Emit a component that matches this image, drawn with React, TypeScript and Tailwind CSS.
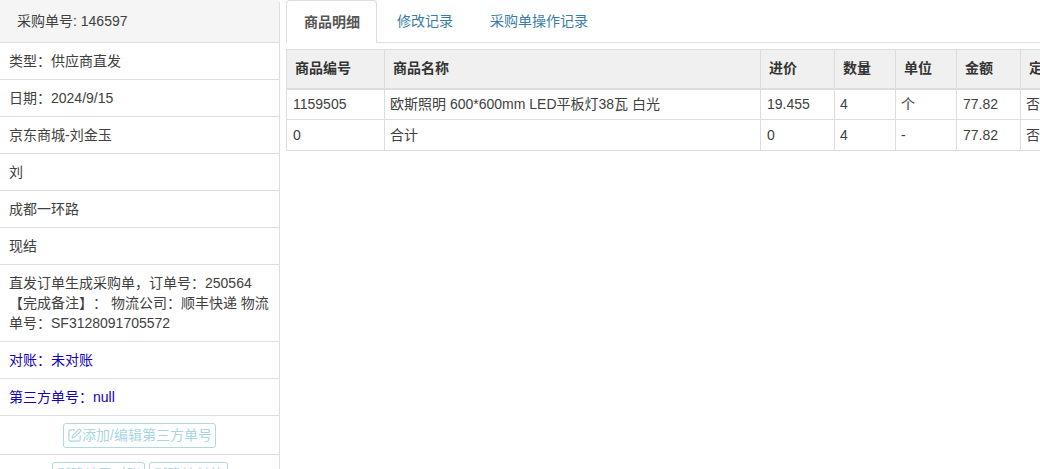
import React from 'react';
import { SquarePen } from 'lucide-react';

const ROWS = ['类型:供应商直发', '日期:2024/9/15', '京东商城-刘金玉', '刘', '成都一环路', '现结'].map((r) =>
  r.replace(':', '\uFF1A'),
);

const COLUMNS = [
  { name: '商品编号', width: 'w-[98px]', pad: 'pl-[6px]' },
  { name: '商品名称', width: 'w-[376px]', pad: 'pl-[5px]' },
  { name: '进价', width: 'w-[74px]', pad: 'pl-[6px]' },
  { name: '数量', width: 'w-[61px]', pad: 'pl-[5px]' },
  { name: '单位', width: 'w-[61px]', pad: 'pl-[5px]' },
  { name: '金额', width: 'w-[64px]', pad: 'pl-[6px]' },
  { name: '定制', width: 'w-[60px]', pad: 'pl-[5px]' },
];

const ITEMS = [
  ['1159505', '欧斯照明 600*600mm LED平板灯38瓦 白光', '19.455', '4', '个', '77.82', '否'],
  ['0', '合计', '0', '4', '-', '77.82', '否'],
];

const ListRow = ({ children, blue }: { children: React.ReactNode; blue?: boolean }) => (
  <div className={`border-b border-[#ddd] px-[9px] py-2 leading-5 ${blue ? 'text-[#1500b8]' : ''}`}>{children}</div>
);

const OutlineButton = ({ children }: { children: React.ReactNode }) => (
  <button className="inline-flex h-[25px] items-center rounded-[3px] border border-[#b4d7e3] px-[3px] text-[14px] text-[#a9d6e3]">
    <SquarePen size={15} strokeWidth={1.8} />
    {children}
  </button>
);

export default function App() {
  return (
    <div className="flex h-[469px] w-[1040px] overflow-hidden bg-white font-['Liberation_Sans','Noto_Sans_CJK_SC',sans-serif] text-[14px] text-[#404040] [text-spacing-trim:space-all]">
      {/* left panel */}
      <div className="w-[280px] shrink-0 overflow-hidden rounded-tr-[4px] border-r border-[#ddd]">
        <div className="h-[43px] border-b border-[#ddd] bg-[#f5f5f5] pl-[17px] pt-[11px] leading-5">采购单号: 146597</div>
        {ROWS.map((r) => (
          <ListRow key={r}>{r}</ListRow>
        ))}
        <ListRow>
          直发订单生成采购单{'\uFF0C'}订单号{'\uFF1A'}250564
          <br />
          【完成备注】{'\uFF1A'} 物流公司{'\uFF1A'}顺丰快递 物流
          <br />
          单号{'\uFF1A'}SF3128091705572
        </ListRow>
        <ListRow blue>对账{'\uFF1A'}未对账</ListRow>
        <ListRow blue>第三方单号{'\uFF1A'}null</ListRow>
        <div className="flex h-[39px] items-start justify-center border-b border-[#ddd] pt-[7px]">
          <OutlineButton>添加/编辑第三方单号</OutlineButton>
        </div>
        <div className="flex justify-center gap-[4px] pt-[7px]">
          <OutlineButton>确认已对账</OutlineButton>
          <OutlineButton>确认付款</OutlineButton>
        </div>
      </div>

      {/* right content */}
      <div className="min-w-0 flex-1 pl-[6px]">
        <div className="flex h-[43px] border-b border-[#ddd]">
          <div className="h-[43px] rounded-t-[4px] border border-b-0 border-[#ddd] bg-white pl-[17px] pr-[16px] pt-[11px] font-bold leading-5 text-[#555]">
            商品明细
          </div>
          <div className="px-[20px] pt-[11px] leading-5 text-[#3a7ca8]">修改记录</div>
          <div className="pl-[17px] pr-[16px] pt-[11px] leading-5 text-[#3a7ca8]">采购单操作记录</div>
        </div>
        <table className="mt-[6px] w-[794px] table-fixed border-collapse">
          <thead>
            <tr className="h-[39px] bg-[#f0f0f0]">
              {COLUMNS.map((c) => (
                <th key={c.name} className={`${c.width} border border-b-2 border-[#ddd] px-2 text-left font-bold text-[#333]`}>
                  <span className="whitespace-nowrap">{c.name}</span>
                </th>
              ))}
            </tr>
          </thead>
          <tbody>
            {ITEMS.map((row) => (
              <tr key={row[0]} className="h-[31px]">
                {row.map((cell, i) => (
                  <td key={i} className={`whitespace-nowrap border border-[#ddd] ${COLUMNS[i].pad} leading-5`}>
                    {cell}
                  </td>
                ))}
              </tr>
            ))}
          </tbody>
        </table>
      </div>
    </div>
  );
}
